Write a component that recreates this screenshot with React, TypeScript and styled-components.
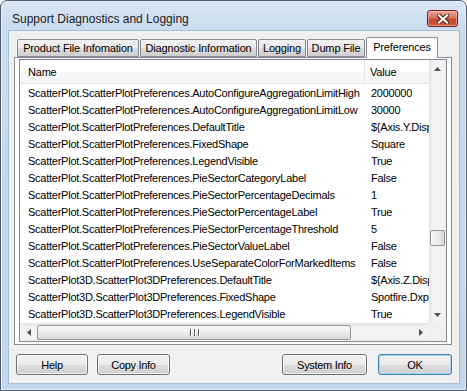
import React from "react";
import styled, { createGlobalStyle } from "styled-components";

const GlobalStyle = createGlobalStyle`
  html, body {
    margin: 0;
    padding: 0;
    background: #ffffff;
  }
  body {
    font-family: "Liberation Sans", Arial, sans-serif;
    color: #000;
  }
`;

const tabs = [
  { label: "Product File Infomation", width: 122 },
  { label: "Diagnostic Information", width: 117 },
  { label: "Logging", width: 48 },
  { label: "Dump File", width: 58 },
  { label: "Preferences", width: 72, active: true },
];

const rows: [string, string][] = [
  ["ScatterPlot.ScatterPlotPreferences.AutoConfigureAggregationLimitHigh", "2000000"],
  ["ScatterPlot.ScatterPlotPreferences.AutoConfigureAggregationLimitLow", "30000"],
  ["ScatterPlot.ScatterPlotPreferences.DefaultTitle", "${Axis.Y.DisplayName} vs. ${Axis.X.DisplayName}"],
  ["ScatterPlot.ScatterPlotPreferences.FixedShape", "Square"],
  ["ScatterPlot.ScatterPlotPreferences.LegendVisible", "True"],
  ["ScatterPlot.ScatterPlotPreferences.PieSectorCategoryLabel", "False"],
  ["ScatterPlot.ScatterPlotPreferences.PieSectorPercentageDecimals", "1"],
  ["ScatterPlot.ScatterPlotPreferences.PieSectorPercentageLabel", "True"],
  ["ScatterPlot.ScatterPlotPreferences.PieSectorPercentageThreshold", "5"],
  ["ScatterPlot.ScatterPlotPreferences.PieSectorValueLabel", "False"],
  ["ScatterPlot.ScatterPlotPreferences.UseSeparateColorForMarkedItems", "False"],
  ["ScatterPlot3D.ScatterPlot3DPreferences.DefaultTitle", "${Axis.Z.DisplayName}"],
  ["ScatterPlot3D.ScatterPlot3DPreferences.FixedShape", "Spotfire.Dxp.Application"],
  ["ScatterPlot3D.ScatterPlot3DPreferences.LegendVisible", "True"],
];

export default function App() {
  return (
    <>
      <GlobalStyle />
      <Window>
        <TitleBar>
          <Title>Support Diagnostics and Logging</Title>
          <CloseButton>
            <svg width="12" height="10" viewBox="0 0 12 10">
              <path d="M2 1.5 L10 8.5 M10 1.5 L2 8.5" stroke="#4a1a12" strokeWidth="4" strokeLinecap="square" />
              <path d="M2 1.5 L10 8.5 M10 1.5 L2 8.5" stroke="#ffffff" strokeWidth="2.2" strokeLinecap="square" />
            </svg>
          </CloseButton>
        </TitleBar>
        <Client>
          <TabStrip>
            {tabs.map((t) => (
              <Tab key={t.label} $active={!!t.active} $width={t.width}>
                {t.label}
              </Tab>
            ))}
          </TabStrip>
          <Panel>
            <ListBox>
              <ListMain>
                <Viewport>
                  <HeaderRow>
                    <NameHead>Name</NameHead>
                    <ValueHead>Value</ValueHead>
                  </HeaderRow>
                  {rows.map(([name, value]) => (
                    <Row key={name}>
                      <NameCell>{name}</NameCell>
                      <ValueCell>{value}</ValueCell>
                    </Row>
                  ))}
                </Viewport>
                <VScroll>
                  <ArrowBox>
                    <svg width="7" height="4" viewBox="0 0 7 4">
                      <path d="M0 4 L3.5 0 L7 4 Z" fill="#4d4d4d" />
                    </svg>
                  </ArrowBox>
                  <VTrack>
                    <VThumb />
                  </VTrack>
                  <ArrowBox>
                    <svg width="7" height="4" viewBox="0 0 7 4">
                      <path d="M0 0 L7 0 L3.5 4 Z" fill="#4d4d4d" />
                    </svg>
                  </ArrowBox>
                </VScroll>
              </ListMain>
              <HScrollRow>
                <HScroll>
                  <ArrowBox>
                    <svg width="4" height="7" viewBox="0 0 4 7">
                      <path d="M4 0 L0 3.5 L4 7 Z" fill="#4d4d4d" />
                    </svg>
                  </ArrowBox>
                  <HTrack>
                    <HThumb>
                      <Grip />
                      <Grip />
                      <Grip />
                    </HThumb>
                  </HTrack>
                  <ArrowBox>
                    <svg width="4" height="7" viewBox="0 0 4 7">
                      <path d="M0 0 L4 3.5 L0 7 Z" fill="#4d4d4d" />
                    </svg>
                  </ArrowBox>
                </HScroll>
                <Corner />
              </HScrollRow>
            </ListBox>
          </Panel>
          <ButtonBar>
            <ButtonGroup>
              <Button $width={72}>Help</Button>
              <Button $width={73}>Copy Info</Button>
            </ButtonGroup>
            <ButtonGroup $gap={11}>
              <Button $width={85}>System Info</Button>
              <Button $width={74} $default>
                OK
              </Button>
            </ButtonGroup>
          </ButtonBar>
        </Client>
      </Window>
    </>
  );
}

const Window = styled.div`
  width: 467px;
  height: 391px;
  box-sizing: border-box;
  display: flex;
  flex-direction: column;
  border: 1px solid #4f5c6d;
  border-radius: 7px 7px 0 0;
  padding: 0 6px 6px 7px;
  background: linear-gradient(to bottom, #d9e6f4 0px, #c9dbef 30px, #c3d6ec 100%);
  box-shadow: inset 0 0 0 1px #e6eff9;
`;

const TitleBar = styled.div`
  height: 29px;
  display: flex;
  align-items: flex-start;
  justify-content: space-between;
  flex-shrink: 0;
`;

const Title = styled.span`
  font-size: 12px;
  margin: 11px 0 0 4px;
  color: #1b1b1b;
`;

const CloseButton = styled.div`
  width: 31px;
  height: 17px;
  box-sizing: border-box;
  margin: 9px 2px 0 0;
  border: 1px solid #6d2418;
  border-radius: 3px;
  display: flex;
  align-items: center;
  justify-content: center;
  background: linear-gradient(to bottom, #e8a597 0%, #d77560 45%, #c64630 55%, #cf5a3e 100%);
  box-shadow: inset 0 0 0 1px rgba(255, 210, 200, 0.45);
`;

const Client = styled.div`
  flex: 1;
  display: flex;
  flex-direction: column;
  background: #f0f0f0;
  border: 1px solid #a8bcd3;
  padding: 6px 7px 8px 5px;
`;

const TabStrip = styled.div`
  display: flex;
  align-items: flex-end;
  gap: 1px;
  height: 20px;
  padding-left: 3px;
  position: relative;
  z-index: 1;
`;

const Tab = styled.div<{ $active: boolean; $width: number }>`
  width: ${({ $width }) => $width}px;
  box-sizing: border-box;
  height: ${({ $active }) => ($active ? 21 : 18)}px;
  margin-bottom: ${({ $active }) => ($active ? -1 : 0)}px;
  border: 1px solid #898c95;
  border-bottom: ${({ $active }) => ($active ? "none" : "1px solid #898c95")};
  border-radius: 2px 2px 0 0;
  background: ${({ $active }) =>
    $active ? "#ffffff" : "linear-gradient(to bottom, #f2f2f2 0%, #ebebeb 50%, #dddddd 51%, #cfcfcf 100%)"};
  font-size: 11px;
  letter-spacing: -0.15px;
  display: flex;
  align-items: ${({ $active }) => ($active ? "flex-start" : "center")};
  justify-content: center;
  padding-top: ${({ $active }) => ($active ? 3 : 0)}px;
  white-space: nowrap;
`;

const Panel = styled.div`
  height: 288px;
  box-sizing: border-box;
  border: 1px solid #898c95;
  background: #ffffff;
  padding: 1px 4px 2px 4px;
  display: flex;
`;

const ListBox = styled.div`
  flex: 1;
  display: flex;
  flex-direction: column;
  border: 1px solid #828790;
  background: #ffffff;
  overflow: hidden;
`;

const ListMain = styled.div`
  flex: 1;
  display: flex;
  min-height: 0;
`;

const Viewport = styled.div`
  flex: 1;
  overflow: hidden;
  display: flex;
  flex-direction: column;
`;

const HeaderRow = styled.div`
  display: flex;
  height: 24px;
  flex-shrink: 0;
  background: linear-gradient(to bottom, #ffffff 0%, #ffffff 50%, #f7f8f9 51%, #f3f4f6 100%);
  border-bottom: 1px solid #e5e5e5;
  box-sizing: border-box;
  font-size: 11px;
  letter-spacing: -0.2px;
`;

const NameHead = styled.div`
  width: 345px;
  padding-left: 8px;
  box-sizing: border-box;
  display: flex;
  align-items: center;
  border-right: 1px solid #e5e5e5;
`;

const ValueHead = styled.div`
  padding-left: 5px;
  display: flex;
  align-items: center;
`;

const Row = styled.div`
  display: flex;
  height: 17px;
  flex-shrink: 0;
  align-items: center;
  font-size: 11px;
  letter-spacing: -0.25px;
  white-space: nowrap;
`;

const NameCell = styled.div`
  width: 345px;
  padding-left: 8px;
  box-sizing: border-box;
  overflow: hidden;
`;

const ValueCell = styled.div`
  flex: 1;
  min-width: 0;
  padding-left: 6px;
  overflow: hidden;
`;

const VScroll = styled.div`
  width: 17px;
  display: flex;
  flex-direction: column;
  background: linear-gradient(to right, #e3e3e3 0%, #f2f2f2 20%, #f4f4f4 80%, #ececec 100%);
`;

const ArrowBox = styled.div`
  width: 17px;
  height: 17px;
  flex-shrink: 0;
  display: flex;
  align-items: center;
  justify-content: center;
`;

const VTrack = styled.div`
  flex: 1;
  display: flex;
  flex-direction: column;
  justify-content: flex-end;
  padding-bottom: 60px;
`;

const VThumb = styled.div`
  height: 16px;
  margin: 0 0 0 1px;
  width: 15px;
  box-sizing: border-box;
  border: 1px solid #979797;
  border-radius: 2px;
  background: linear-gradient(to right, #f6f6f6 0%, #ececec 50%, #d8d8d8 100%);
`;

const HScrollRow = styled.div`
  height: 18px;
  display: flex;
  flex-shrink: 0;
`;

const HScroll = styled.div`
  flex: 1;
  display: flex;
  align-items: center;
  background: linear-gradient(to bottom, #e3e3e3 0%, #f2f2f2 20%, #f4f4f4 80%, #ececec 100%);
`;

const HTrack = styled.div`
  flex: 1;
  height: 100%;
  display: flex;
  align-items: center;
`;

const HThumb = styled.div`
  width: 314px;
  height: 15px;
  box-sizing: border-box;
  border: 1px solid #979797;
  border-radius: 2px;
  background: linear-gradient(to bottom, #f6f6f6 0%, #ececec 50%, #d8d8d8 100%);
  display: flex;
  align-items: center;
  justify-content: center;
  gap: 1px;
`;

const Grip = styled.div`
  width: 1px;
  height: 7px;
  background: #5f5f5f;
  box-shadow: 1px 0 0 #ffffff;
  margin: 0 1px;
`;

const Corner = styled.div`
  width: 17px;
  background: #f0f0f0;
`;

const ButtonBar = styled.div`
  display: flex;
  justify-content: space-between;
  margin-top: 9px;
  padding: 0 0 0 2px;
`;

const ButtonGroup = styled.div<{ $gap?: number }>`
  display: flex;
  gap: ${({ $gap }) => $gap ?? 9}px;
`;

const Button = styled.div<{ $width: number; $default?: boolean }>`
  width: ${({ $width }) => $width}px;
  height: 21px;
  box-sizing: border-box;
  border: 1px solid ${({ $default }) => ($default ? "#3c7fb1" : "#707070")};
  border-radius: 3px;
  background: linear-gradient(to bottom, #f2f2f2 0%, #ebebeb 50%, #dddddd 51%, #cfcfcf 100%);
  box-shadow: inset 0 0 0 1px
    ${({ $default }) => ($default ? "#a4d8f4" : "rgba(255, 255, 255, 0.7)")};
  font-size: 11px;
  letter-spacing: -0.3px;
  display: flex;
  align-items: center;
  justify-content: center;
`;
